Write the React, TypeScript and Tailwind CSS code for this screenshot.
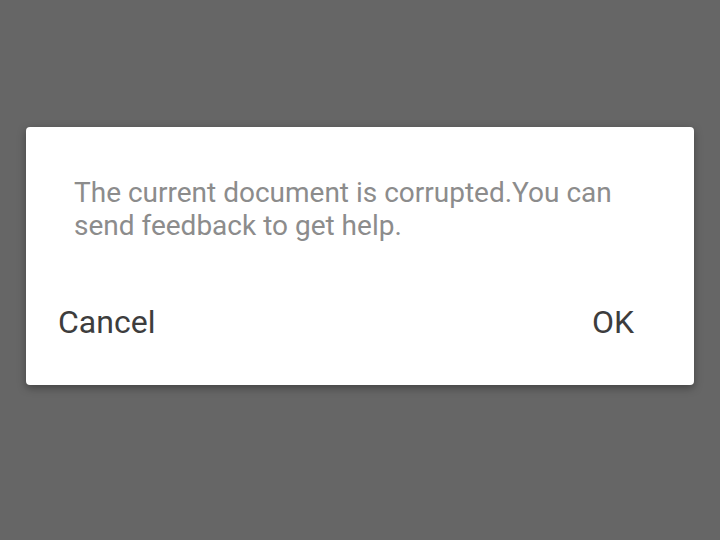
export default function App() {
  return (
    <div className="w-[720px] h-[540px] bg-[#666666] pt-[127px] px-[26px] font-['Roboto',sans-serif]">
      <div className="bg-white rounded-[4px] h-[258px] shadow-[0_3px_8px_rgba(0,0,0,0.35)] flex flex-col">
        <p className="pt-[49px] pl-[48px] pr-[50px] text-[28px] leading-[33px] text-[#8c8c8c]">
          The current document is corrupted.You can send feedback to get help.
        </p>
        <div className="flex justify-between items-center mt-[60px] pl-[32px] pr-[60px] leading-[40px]">
          <span className="text-[32px] text-[#3d3d3d]">Cancel</span>
          <span className="text-[32px] text-[#3d3d3d]">OK</span>
        </div>
      </div>
    </div>
  )
}
